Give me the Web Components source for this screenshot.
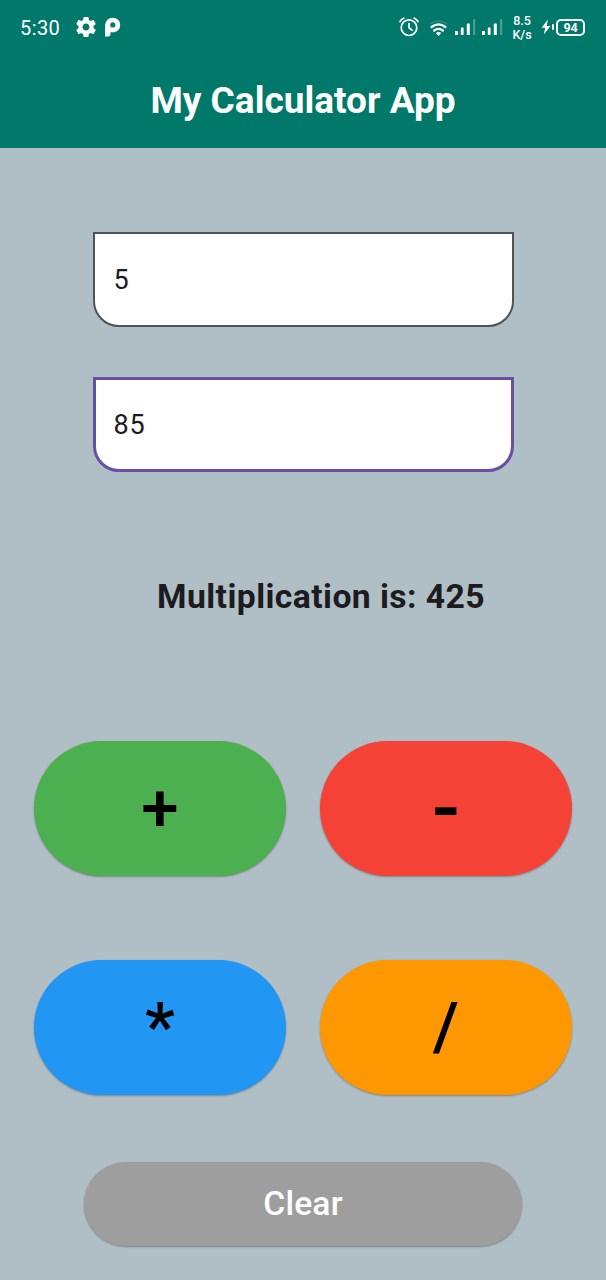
<!DOCTYPE html>
<html lang="en">
<head>
<meta charset="utf-8">
<title>My Calculator App</title>
<style>
html,body{margin:0;padding:0;background:#b0bec5}
body{font-family:Roboto,"Liberation Sans",sans-serif}
</style>
</head>
<body>
<calculator-app></calculator-app>
<script>
const define = (name, html) => {
  const template = document.createElement('template');
  template.innerHTML = html;
  customElements.define(name, class extends HTMLElement {
    constructor() {
      super();
      this.attachShadow({ mode: 'open' }).append(template.content.cloneNode(true));
    }
  });
};

define('signal-bars', `
<style>:host{display:block;width:21px;height:18px}svg{display:block}</style>
<svg width="21" height="18" viewBox="0 0 21 18" fill="#fff"><rect x="0" y="13" width="3" height="4" rx=".6"/><rect x="5.8" y="9.5" width="2.8" height="7.5" rx=".6"/><rect x="11.8" y="5.5" width="3" height="11.5" rx=".6"/><rect x="18" y="1" width="2.2" height="16" rx=".6" opacity=".28"/></svg>`);

define('status-bar', `
<style>
:host{display:flex;height:54px;color:#fff;box-sizing:border-box;padding:0 21px 0 20px;align-items:center}
svg{display:block;flex:none}
.time{font-size:20px;line-height:24px;letter-spacing:.4px;width:56px;padding-top:1px}
.gear{margin-right:9px}
.grow{flex:1}
.alarm{margin-right:11px}
.wifi{margin:3px 8px 0 0}
signal-bars{margin:0 6px 0 0}
signal-bars + signal-bars{margin-right:8px}
.rate{font-size:12.5px;line-height:13.5px;font-weight:500;width:22px;text-align:center;margin-right:8px;padding-top:1px;white-space:nowrap}
.bolt{margin-right:1px}
.nub{width:2px;height:6px;border-radius:1px;background:#fff;margin-right:2px}
.battery{box-sizing:border-box;width:29px;height:17px;border:2px solid #fff;border-radius:5px;font-size:12.5px;font-weight:700;line-height:13px;text-align:center;letter-spacing:-.2px}
</style>
<span class="time">5:30</span>
<svg class="gear" width="20" height="20" viewBox="2 2 20 20"><path fill="#fff" d="M19.43 12.98c.04-.32.07-.64.07-.98s-.03-.66-.07-.98l2.11-1.65c.19-.15.24-.42.12-.64l-2-3.46c-.12-.22-.39-.3-.61-.22l-2.49 1c-.52-.4-1.08-.73-1.69-.98l-.38-2.65C14.46 2.18 14.25 2 14 2h-4c-.25 0-.46.18-.49.42l-.38 2.65c-.61.25-1.17.59-1.69.98l-2.49-1c-.23-.09-.49 0-.61.22l-2 3.46c-.13.22-.07.49.12.64l2.11 1.65c-.04.32-.07.65-.07.98s.03.66.07.98l-2.11 1.65c-.19.15-.24.42-.12.64l2 3.46c.12.22.39.3.61.22l2.49-1c.52.4 1.08.73 1.69.98l.38 2.65c.03.24.24.42.49.42h4c.25 0 .46-.18.49-.42l.38-2.65c.61-.25 1.17-.59 1.69-.98l2.49 1c.23.09.49 0 .61-.22l2-3.46c.12-.22.07-.49-.12-.64l-2.11-1.65zM12 15.5c-1.93 0-3.5-1.57-3.5-3.5s1.57-3.5 3.5-3.5 3.5 1.57 3.5 3.5-1.57 3.5-3.5 3.5z"/></svg>
<svg width="16" height="20" viewBox="0 0 16 20"><path fill="#fff" fill-rule="evenodd" d="M0 19.5V8.300A7.600 7.600 0 0 1 7.600.7C12 .7 15.200 3.700 15.200 8s-3.200 7.300-7.300 7.300H5.400v2.400a1.800 1.800 0 0 1-1.800 1.800zM7.800 5.300a2.600 2.600 0 1 0 0 5.200 2.600 2.600 0 1 0 0-5.200z"/></svg>
<span class="grow"></span>
<svg class="alarm" width="20" height="20" viewBox="0 0 20 20" fill="none" stroke="#fff" stroke-width="1.7" stroke-linecap="round" stroke-linejoin="round"><circle cx="10" cy="10.7" r="7.8"/><path d="M10 6.5v4.3l3 2.4M1 4.6C1.8 3 3 1.9 4.7 1.2M19 4.6C18.2 3 17 1.9 15.300 1.200"/></svg>
<svg class="wifi" width="17" height="17" viewBox="0 0 17 17" fill="none" stroke="#fff" stroke-linecap="round"><path opacity=".15" stroke-width="1.600" d="M.8 3.600Q8.500-1.500 16.200 3.600"/><path stroke-width="2.300" d="M1.600 7Q8.500 1.700 15.400 7M4.200 10.500Q8.500 7.200 12.800 10.500"/><path fill="#fff" stroke="none" d="M5.800 13Q8.500 11 11.200 13L8.500 16z"/></svg>
<signal-bars></signal-bars><signal-bars></signal-bars>
<span class="rate">8.5<br>K/s</span>
<svg class="bolt" width="10" height="16" viewBox="0 0 10 16"><path fill="#fff" d="M6.800.5.6 8.700h3.600L2.800 15.500 9.500 7H5.700z"/></svg>
<span class="nub"></span><span class="battery">94</span>`);

define('app-header', `
<style>
:host{display:block;height:148px;background:#00796b}
h1{margin:0;height:94px;line-height:93px;text-align:center;color:#fff;font-size:37px;font-weight:700;white-space:nowrap}
</style>
<status-bar></status-bar><h1><slot></slot></h1>`);

define('number-field', `
<style>
:host{display:flex;align-items:center;box-sizing:border-box;width:421px;height:95px;padding-left:19px;background:#fff;border:2px solid #4d5359;border-radius:0 0 26px 26px;color:#1d1b20;font-size:27px;letter-spacing:.84px;line-height:32px}
:host([focused]){border:3px solid #6750a4;padding-left:18px}
</style>
<slot></slot>`);

define('op-button', `
<style>
:host{display:flex;justify-content:center;align-items:center;height:135px;border-radius:68px;background:var(--fill);color:#000;font-size:67.300px;font-weight:500;line-height:79px;box-shadow:0 1px 2px rgba(0,0,0,.3)}
:host([wide]){font-size:82px}
</style>
<slot></slot>`);

define('clear-button', `
<style>
:host{display:flex;justify-content:center;align-items:center;width:438px;height:84px;border-radius:42px;background:#9e9e9e;color:#fff;font-size:33.700px;font-weight:500;letter-spacing:.17px;line-height:40px;box-shadow:0 1px 2px rgba(0,0,0,.3)}
</style>
<slot></slot>`);

define('calculator-app', `
<style>
:host{display:flex;flex-direction:column;width:606px;height:1280px;background:#b0bec5;overflow:hidden}
.fields{display:grid;gap:50px;justify-content:center;padding-top:84px}
.result{margin:105px 0 0;padding-left:36px;text-align:center;color:#1d1b20;font-size:33.700px;font-weight:700;letter-spacing:.42px;line-height:40px;white-space:nowrap}
.ops{display:grid;grid-template-columns:1fr 1fr;column-gap:34px;row-gap:84px;padding:0 34px;margin-top:124px}
clear-button{align-self:center;margin-top:67px}
</style>
<app-header>My Calculator App</app-header>
<div class="fields"><number-field>5</number-field><number-field focused>85</number-field></div>
<p class="result">Multiplication is: 425</p>
<div class="ops">
<op-button style="--fill:#4caf50">+</op-button><op-button wide style="--fill:#f44336">-</op-button>
<op-button style="--fill:#2196f3">*</op-button><op-button style="--fill:#ff9800">/</op-button>
</div>
<clear-button>Clear</clear-button>`);
</script>
</body>
</html>
